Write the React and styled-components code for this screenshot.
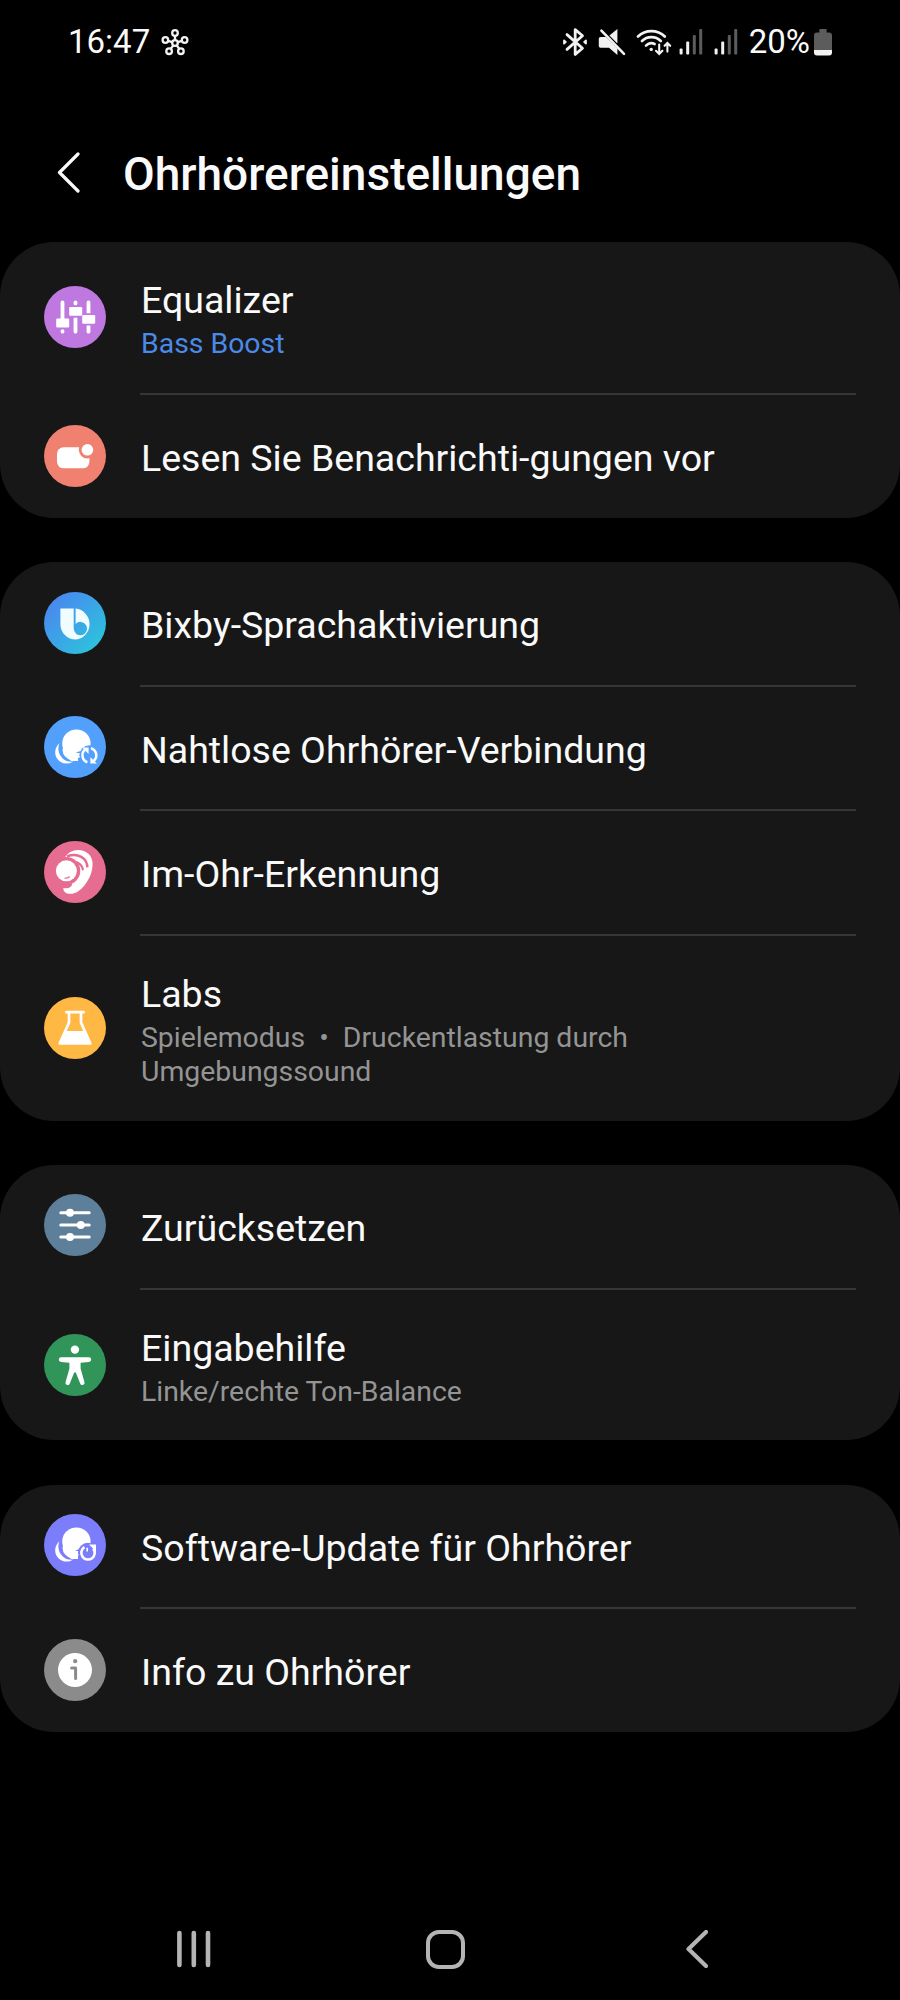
import styled, { createGlobalStyle } from 'styled-components';

function ShareIcon() {
  return (
    <svg width="28" height="28" viewBox="0 0 28 28" fill="none" stroke="#f2f2f2" strokeWidth="2.3">
      <circle cx="14" cy="15" r="2.8" />
      <circle cx="14" cy="5" r="2.8" />
      <circle cx="23.6" cy="12" r="2.8" />
      <circle cx="19.9" cy="23.2" r="2.8" />
      <circle cx="8.1" cy="23.2" r="2.8" />
      <circle cx="4.4" cy="12" r="2.8" />
      <path d="M14 7.8v4.4M20.9 12.9l-4.2 1.3M18.3 20.9l-2.6-3.6M9.7 20.9l2.6-3.6M7.1 12.9l4.2 1.3" />
    </svg>
  );
}

function BluetoothIcon() {
  return (
    <svg width="26" height="30" viewBox="0 0 26 30" fill="none" stroke="#f2f2f2" strokeWidth="2.8" strokeLinecap="round" strokeLinejoin="round">
      <path d="M5 7.6l15.5 13.6L13.2 27.4V2.6l7.3 6.2L5 22.4" />
      <path d="M2 13.4l1.8 1.6L2 16.6zM24 13.4L22.2 15l1.8 1.6z" strokeWidth="1.8" fill="#f2f2f2" />
    </svg>
  );
}

function MuteIcon() {
  return (
    <svg width="28" height="30" viewBox="0 0 28 30" fill="#f2f2f2">
      <path d="M11.4 8.6L19.4 2v14.6zM2.6 10h5.2l11.6 11.4V28l-8.4-7.2H2.6A1.8 1.8 0 0 1 .8 19v-7.2A1.8 1.8 0 0 1 2.6 10z" />
      <path d="M3.4 3.6l22.6 23.2" stroke="#f2f2f2" strokeWidth="2.6" strokeLinecap="round" />
    </svg>
  );
}

function WifiIcon() {
  return (
    <svg width="36" height="30" viewBox="0 0 36 30" fill="none" stroke="#f2f2f2" strokeWidth="2.7" strokeLinecap="round">
      <path d="M2 9.5a19.2 19.2 0 0 1 26.8 0M6 14a13.4 13.4 0 0 1 18.8 0M10 18.6a7.8 7.8 0 0 1 8.6-1.6" />
      <circle cx="15.2" cy="22.4" r="1.7" fill="#f2f2f2" stroke="none" />
      <path d="M23.2 17.6v9M20 23.8l3.2 3.2 3.2-3.2M31.4 24.6v-8M28.6 18.8l2.8-2.8 2.8 2.8" strokeWidth="2.1" />
    </svg>
  );
}

function SignalIcon() {
  return (
    <svg width="24" height="28" viewBox="0 0 24 28">
      <rect x="0.6" y="20.4" width="3" height="6.2" rx="1" fill="#f2f2f2" />
      <rect x="7.2" y="13.6" width="3" height="13" rx="1" fill="#f2f2f2" />
      <rect x="13.8" y="7" width="3" height="19.6" rx="1" fill="#5c5c5c" />
      <rect x="20.2" y="1" width="3" height="25.6" rx="1" fill="#5c5c5c" />
    </svg>
  );
}

function BatteryIcon() {
  return (
    <svg width="18" height="27" viewBox="0 0 18 27">
      <path d="M5.4 0h7.2v3.6H15a3 3 0 0 1 3 3V21H0V6.6a3 3 0 0 1 3-3h2.4z" fill="#5c5c5c" />
      <path d="M0 21h18v2.6a3 3 0 0 1-3 3H3a3 3 0 0 1-3-3z" fill="#f2f2f2" />
    </svg>
  );
}

function Chevron({ width, height, color, stroke }) {
  return (
    <svg width={width} height={height} viewBox={`0 0 ${width} ${height}`} fill="none">
      <path
        d={`M${width - 2} 2L2.5 ${height / 2}L${width - 2} ${height - 2}`}
        stroke={color}
        strokeWidth={stroke}
        strokeLinecap="round"
        strokeLinejoin="round"
      />
    </svg>
  );
}

function EqualizerGlyph() {
  return (
    <>
      <rect x="16.6" y="14.5" width="3.8" height="20" rx="1.9" />
      <rect x="16.6" y="43.2" width="3.8" height="4.4" rx="1.9" />
      <rect x="12.2" y="32.6" width="13" height="8.8" rx="1.2" />
      <rect x="29.6" y="14.5" width="3.8" height="4.8" rx="1.9" />
      <rect x="25.2" y="21" width="13" height="8.8" rx="1.2" />
      <path d="M29.6 31.8h3.8v13.9a1.9 1.9 0 0 1-3.8 0z" />
      <path d="M42.6 27.2V16.4a1.9 1.9 0 0 1 3.8 0v10.8z" />
      <rect x="38.2" y="29" width="13" height="8.8" rx="1.2" />
      <path d="M42.6 39.6h3.8v6.1a1.9 1.9 0 0 1-3.8 0z" />
    </>
  );
}

function NotificationGlyph() {
  return (
    <>
      <rect x="13" y="22.3" width="32.4" height="21" rx="6.5" />
      <circle cx="43.4" cy="24.8" r="8.6" fill="#f08070" />
      <circle cx="43.4" cy="24.8" r="5.8" />
    </>
  );
}

function BixbyGlyph() {
  return (
    <path
      fillRule="evenodd"
      d="M16.4 16.6H29.7V36.6A6.7 6.7 0 1 0 31.6 31.9V16.6A15.6 15.6 0 0 1 31.8 47.6A15.4 15.4 0 0 1 16.4 32.2Z"
      fill="#f1fcff"
    />
  );
}

// shared body of the two earbud icons, gaps are painted in the circle colour
function EarbudShape({ bg }) {
  return (
    <>
      <circle cx="22.6" cy="36.2" r="11.4" />
      <circle cx="27.6" cy="32.6" r="13.2" fill={bg} />
      <circle cx="32.4" cy="27.6" r="14.2" />
      <circle cx="28" cy="34.2" r="9.4" />
      <path d="M22.6 41.8L27.4 45H34V36z" />
    </>
  );
}

function SeamlessGlyph() {
  return (
    <>
      <EarbudShape bg="#539ffc" />
      <circle cx="45.4" cy="39.2" r="10" fill="#539ffc" />
      <path d="M31.6 36.4l5-1.4v2.6z" fill="#539ffc" />
      <g fill="none" stroke="#fff" strokeWidth="2.5">
        <path d="M43.4 46.2A7.4 7.4 0 0 1 41.2 33.4" />
        <path d="M47 32.2A7.4 7.4 0 0 1 49.6 45" />
      </g>
      <path d="M38.2 31.6h6.4v6.4zM53 47.6h-6.6v-6.4z" />
    </>
  );
}

function EarGlyph() {
  return (
    <>
      <path d="M20.6 17C23.6 11.6 28.4 8.9 34 8.9C42.4 8.9 48.6 14.6 48.6 22.6C48.6 30.4 46.2 36.4 42 42.2C37.8 48.4 32.6 52.8 26 52.8C22 52.8 19.4 50.6 19.2 47.2H22C25 47.4 27 46 28 44Z" />
      <circle cx="22.4" cy="29.8" r="13.9" fill="#e66c92" />
      <path d="M23 15.4C34 11.4 43.2 17 43.4 26.4" fill="none" stroke="#e66c92" strokeWidth="2.4" />
      <path d="M33.4 21.4C36.6 23 38.4 26 38.8 28.4" fill="none" stroke="#e66c92" strokeWidth="2.2" strokeLinecap="round" />
      <circle cx="22.4" cy="29.8" r="10.5" />
      <path d="M21 37.2q2.4.2 4.4-1.4" fill="none" stroke="#e66c92" strokeWidth="1.2" strokeLinecap="round" />
    </>
  );
}

function LabsGlyph() {
  return (
    <>
      <path d="M22.4 15.2h17.2M25 16v9.6L15.8 46.4h30.4L37 25.6V16" fill="none" stroke="#fff" strokeWidth="2.7" strokeLinecap="round" strokeLinejoin="round" />
      <path d="M22 34H40L47 47H15z" />
    </>
  );
}

function SlidersGlyph() {
  return (
    <>
      <path d="M16.8 18.8h28.4M16.8 31h28.4M16.8 43h28.4" stroke="#fff" strokeWidth="3" strokeLinecap="round" />
      <circle cx="26" cy="18.8" r="4" />
      <circle cx="36.8" cy="31" r="4" />
      <circle cx="26" cy="43" r="4" />
    </>
  );
}

function AccessibilityGlyph() {
  return (
    <>
      <circle cx="30.9" cy="15.6" r="4.2" />
      <path d="M17.2 23.2h27.6a2.4 2.4 0 0 1 0 4.8L36.6 28.8V34.6L40.4 48a2.2 2.2 0 0 1-4.2 1.6L31.8 38.6h-1.6l-4.4 11a2.2 2.2 0 0 1-4.2-1.6l3.8-13.4V28.8L17.2 28a2.4 2.4 0 0 1 0-4.8z" />
    </>
  );
}

function UpdateGlyph() {
  return (
    <>
      <EarbudShape bg="#7b7dfa" />
      <circle cx="43.8" cy="38.6" r="9.8" fill="#7b7dfa" />
      <path d="M31 36.4l5-1.4v2.6z" fill="#7b7dfa" />
      <path d="M40.4 33.2A6.7 6.7 0 1 0 49.2 34.6" fill="none" stroke="#fff" strokeWidth="2.6" />
      <path d="M45 30.4H52V37.4z" />
      <path d="M43.2 33.8v3.6" stroke="#fff" strokeWidth="1.6" />
    </>
  );
}

function InfoGlyph() {
  return (
    <>
      <circle cx="31" cy="31" r="17" />
      <circle cx="31.2" cy="22.2" r="2.1" fill="#8b8b8b" />
      <path d="M27.6 29h4v10.4" fill="none" stroke="#8b8b8b" strokeWidth="3" strokeLinecap="round" strokeLinejoin="round" />
    </>
  );
}

const groups = [
  [
    { label: 'Equalizer', value: 'Bass Boost', active: true, color: '#bf78e0', Glyph: EqualizerGlyph },
    { label: 'Lesen Sie Benachrichti-gungen vor', color: '#f08070', Glyph: NotificationGlyph },
  ],
  [
    { label: 'Bixby-Sprachaktivierung', color: 'linear-gradient(135deg, #4a87f0 12%, #2cc3dc 88%)', Glyph: BixbyGlyph },
    { label: 'Nahtlose Ohrhörer-Verbindung', color: '#539ffc', Glyph: SeamlessGlyph },
    { label: 'Im-Ohr-Erkennung', color: '#e66c92', Glyph: EarGlyph },
    { label: 'Labs', value: 'Spielemodus  •  Druckentlastung durch\nUmgebungssound', color: '#ffb844', Glyph: LabsGlyph },
  ],
  [
    { label: 'Zurücksetzen', color: '#5e7f99', Glyph: SlidersGlyph },
    { label: 'Eingabehilfe', value: 'Linke/rechte Ton-Balance', color: '#31955a', Glyph: AccessibilityGlyph },
  ],
  [
    { label: 'Software-Update für Ohrhörer', color: '#7b7dfa', Glyph: UpdateGlyph },
    { label: 'Info zu Ohrhörer', color: '#8b8b8b', Glyph: InfoGlyph },
  ],
];

function App() {
  return (
    <Screen>
      <GlobalStyle />
      <StatusBar>
        <Clock>16:47</Clock>
        <ShareIcon />
        <StatusIcons>
          <BluetoothIcon />
          <MuteIcon />
          <WifiIcon />
          <Signals>
            <SignalIcon />
            <SignalIcon />
          </Signals>
          <Battery>
            <span>20%</span>
            <BatteryIcon />
          </Battery>
        </StatusIcons>
      </StatusBar>

      <Header>
        <Chevron width={23} height={41} color="#fafafa" stroke={3.2} />
        <Title>Ohrhörereinstellungen</Title>
      </Header>

      <Groups>
        {groups.map((rows) => (
          <Card key={rows[0].label}>
            {rows.map(({ label, value, active, color, Glyph }) => (
              <Row key={label}>
                <IconCircle $color={color}>
                  <svg width="62" height="62" viewBox="0 0 62 62" fill="#fff">
                    <Glyph />
                  </svg>
                </IconCircle>
                <RowBody $tall={!!value}>
                  <Label>{label}</Label>
                  {value && <Value $active={active}>{value}</Value>}
                </RowBody>
              </Row>
            ))}
          </Card>
        ))}
      </Groups>

      <NavBar>
        <svg width="36" height="38" viewBox="0 0 36 38" stroke="#b4b4b4" strokeWidth="4.6" strokeLinecap="round">
          <path d="M3.4 3v32M17.8 3v32M32 3v32" />
        </svg>
        <HomeButton />
        <Chevron width={22} height={38} color="#b4b4b4" stroke={4.2} />
      </NavBar>
    </Screen>
  );
}

const GlobalStyle = createGlobalStyle`
  body {
    margin: 0;
    background: #000;
  }
`;

const Screen = styled.div`
  display: flex;
  flex-direction: column;
  box-sizing: border-box;
  width: 900px;
  height: 2000px;
  background: #000;
  color: #fafafa;
  font-family: Roboto, sans-serif;

  svg {
    display: block;
    flex-shrink: 0;
  }
`;

const StatusBar = styled.div`
  display: flex;
  align-items: center;
  height: 84px;
  padding: 0 68px;
  font-size: 33px;
  line-height: 40px;
`;

const Clock = styled.span`
  width: 93px;
`;

const StatusIcons = styled.div`
  display: flex;
  align-items: center;
  margin-left: auto;
  gap: 10px;
`;

const Signals = styled.div`
  display: flex;
  gap: 11px;
  margin-left: -3px;
`;

const Battery = styled.div`
  display: flex;
  align-items: center;
  gap: 4px;
  margin-left: 1px;
`;

const Header = styled.header`
  display: flex;
  align-items: center;
  height: 158px;
  box-sizing: border-box;
  padding: 18px 57px 0;
  gap: 43px;
`;

const Title = styled.h1`
  margin: 4px 0 0;
  font-size: 46px;
  font-weight: 500;
  line-height: 56px;
`;

const Groups = styled.main`
  display: flex;
  flex-direction: column;
  gap: 44.2px;
`;

const Card = styled.section`
  border-radius: 54px;
  background: #171717;
`;

const Row = styled.div`
  display: flex;
  align-items: center;
  padding: 0 44px;
`;

const IconCircle = styled.div`
  flex-shrink: 0;
  width: 62px;
  height: 62px;
  margin-bottom: 3.5px;
  border-radius: 50%;
  background: ${({ $color }) => $color};

  ${Row}:last-child & {
    margin-bottom: 1px;
  }
`;

const RowBody = styled.div`
  flex: 1;
  margin-left: 34px;
  padding: ${({ $tall }) => ($tall ? '36px 0 32.5px 1px' : '41px 0 37.8px 1px')};
  border-bottom: 2px solid #363636;

  ${Row}:last-child & {
    border-bottom: 0;
  }
`;

const Label = styled.div`
  font-size: 37.5px;
  line-height: 44px;
`;

const Value = styled.div`
  margin-top: 5px;
  color: ${({ $active }) => ($active ? '#4a8ae8' : '#949494')};
  font-size: 28.4px;
  line-height: 33.4px;
  white-space: pre-wrap;
`;

const NavBar = styled.nav`
  display: flex;
  align-items: center;
  height: 102px;
  margin-top: auto;
  padding-left: 176px;
`;

const HomeButton = styled.div`
  box-sizing: border-box;
  width: 39px;
  height: 39px;
  margin: 0 221px 0 214px;
  border: 4.5px solid #b4b4b4;
  border-radius: 13px;
`;

export default App;
